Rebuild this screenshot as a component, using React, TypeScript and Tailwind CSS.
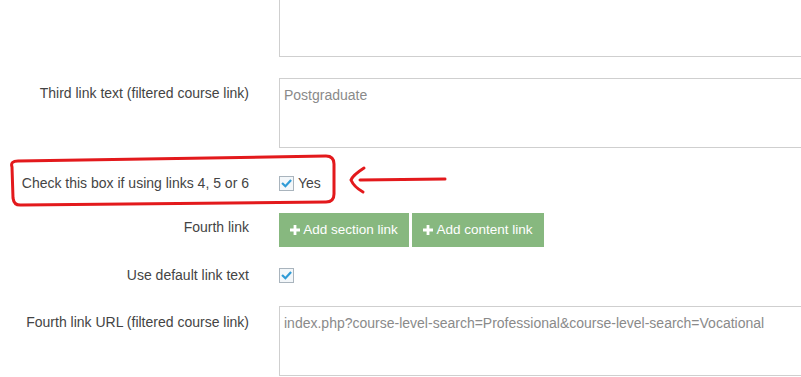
const font = { fontFamily: '"Liberation Sans", Arial, sans-serif' };

function Label({ children, pad = 'pt-0' }: { children: React.ReactNode; pad?: string }) {
  return (
    <div className={`w-[249px] shrink-0 text-right text-[14px] leading-[18px] text-[#444] ${pad}`}>
      {children}
    </div>
  );
}

function Box({ value, className = '' }: { value?: string; className?: string }) {
  return (
    <textarea
      readOnly
      defaultValue={value}
      className={`w-[560px] h-[70px] shrink-0 resize-none border border-[#cfcfcf] bg-white px-[4px] pt-[6px] text-[14px] leading-[20px] text-[#8a8a8a] outline-none ${className}`}
      style={font}
    />
  );
}

function Check() {
  return (
    <span className="flex h-[15px] w-[15px] items-center justify-center border border-[#a9b4bd] bg-[#f3f7fa]">
      <svg viewBox="0 0 12 12" className="h-[11px] w-[11px]">
        <path d="M2 6.2 L4.8 9 L10.2 3" fill="none" stroke="#2f9bd6" strokeWidth="2.4" strokeLinecap="square" />
      </svg>
    </span>
  );
}

function PlusIcon() {
  return (
    <svg viewBox="0 0 10 10" className="h-[10px] w-[10px]">
      <path d="M3.6 0 H6.4 V3.6 H10 V6.4 H6.4 V10 H3.6 V6.4 H0 V3.6 H3.6 Z" fill="white" />
    </svg>
  );
}

function GreenButton({ text, width }: { text: string; width: string }) {
  return (
    <button className={`flex h-[34px] items-center justify-center gap-[3px] bg-[#87b87f] text-[13.5px] text-white ${width}`}>
      <PlusIcon />
      {text}
    </button>
  );
}

export default function App() {
  return (
    <div className="relative h-[377px] w-[801px] overflow-hidden bg-white" style={font}>
      <div className="flex flex-col">
        {/* top textarea (cut off) */}
        <div className="-mt-[13px] flex gap-[30px]">
          <div className="w-[249px] shrink-0" />
          <Box />
        </div>

        <div className="mt-[21px] flex gap-[30px]">
          <Label pad="pt-[6px]">Third link text (filtered course link)</Label>
          <Box value="Postgraduate" />
        </div>

        <div className="mt-[26px] flex gap-[30px]">
          <Label>Check this box if using links 4, 5 or 6</Label>
          <div className="flex h-[18px] items-center gap-[4px] text-[14px] text-[#444]">
            <Check />
            <span>Yes</span>
          </div>
        </div>

        <div className="mt-[21px] flex gap-[30px]">
          <Label pad="pt-[5px]">Fourth link</Label>
          <div className="flex gap-[3px]">
            <GreenButton text="Add section link" width="w-[130px]" />
            <GreenButton text="Add content link" width="w-[132px]" />
          </div>
        </div>

        <div className="mt-[19px] flex gap-[30px]">
          <Label>Use default link text</Label>
          <div className="flex h-[18px] items-center">
            <Check />
          </div>
        </div>

        <div className="mt-[22px] flex gap-[30px]">
          <Label pad="pt-[7px]">Fourth link URL (filtered course link)</Label>
          <Box value="index.php?course-level-search=Professional&course-level-search=Vocational" />
        </div>
      </div>

      {/* red annotation */}
      <svg className="pointer-events-none absolute left-0 top-0" width="801" height="377">
        <path
          d="M12 167 Q10 161 18 161 L326 156 Q334 156 334 164 L334 194 Q334 202 326 202 L22 205 Q14 206 13 198 Z"
          fill="none"
          stroke="#e3191c"
          strokeWidth="3"
          strokeLinejoin="round"
        />
        <path d="M360 180 L445 179" fill="none" stroke="#e3191c" strokeWidth="3" strokeLinecap="round" />
        <path d="M364 168 Q353 175 351 180 Q354 187 363 192" fill="none" stroke="#e3191c" strokeWidth="3" strokeLinecap="round" />
      </svg>
    </div>
  );
}
